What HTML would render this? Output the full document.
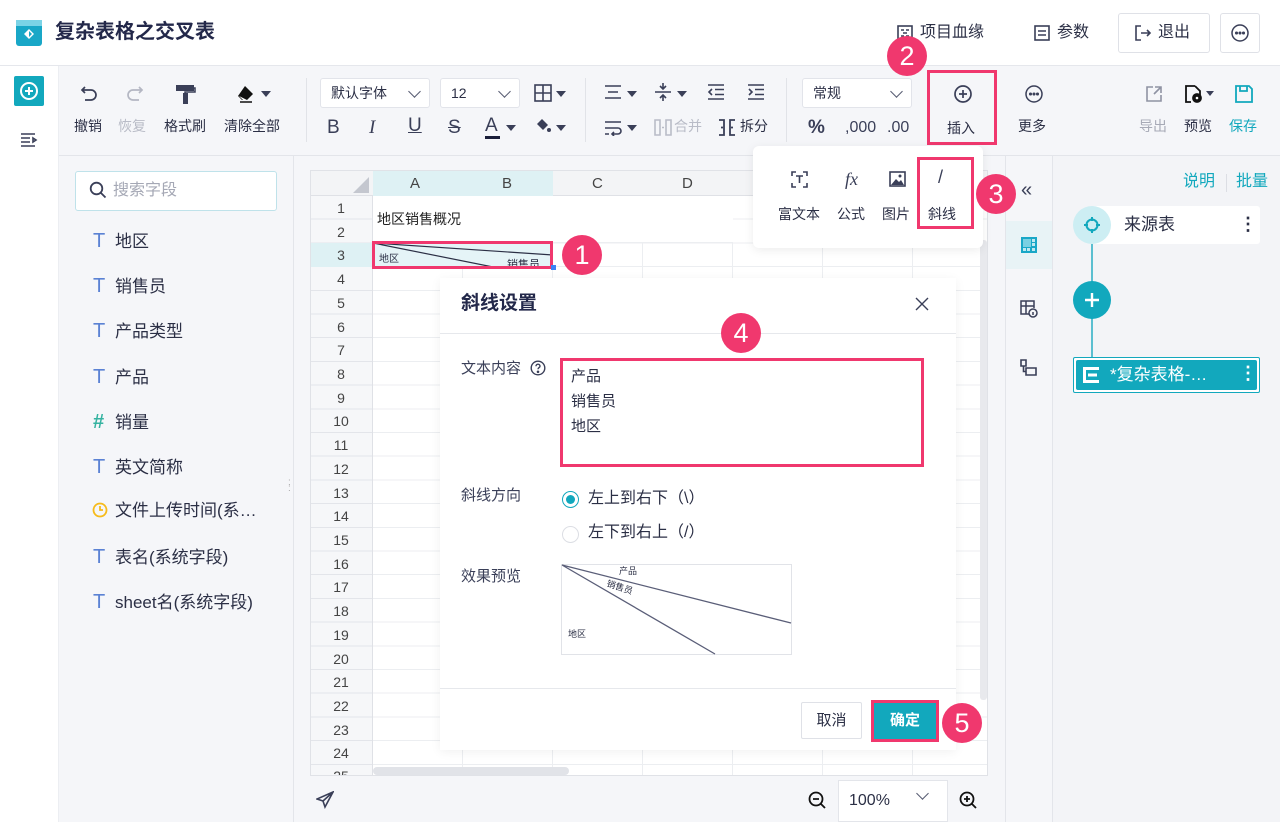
<!DOCTYPE html>
<html><head><meta charset="utf-8">
<style>
*{box-sizing:border-box;margin:0;padding:0}
body{width:1280px;height:822px;overflow:hidden;background:#fff;font-family:"Liberation Sans","Noto Sans CJK SC",sans-serif;color:#2b2f45;position:relative;line-height:1.15}
.a{position:absolute}
.t{font-size:14px;color:#2b2f45;white-space:nowrap}
.ic{position:absolute}
.red{position:absolute;border:3px solid #f0386e}
.num{position:absolute;width:40px;height:40px;border-radius:50%;background:#f0386e;color:#fff;font-size:27px;text-align:center;line-height:40px}
.sel{position:absolute;background:#fff;border:1px solid #e2e4ea;border-radius:3px;font-size:14px;padding-left:10px;line-height:28px}
.chev{position:absolute;right:10px;top:8px;width:9px;height:9px;border-right:1.5px solid #555a70;border-bottom:1.5px solid #555a70;transform:rotate(45deg)}
.tri{display:inline-block;width:0;height:0;border-left:5px solid transparent;border-right:5px solid transparent;border-top:6px solid #3a3f58;vertical-align:middle}
.fld{position:absolute;left:93px;font-size:17px;color:#2b2f45}
.fld i{font-style:normal;color:#5b82d4;font-size:20px;display:inline-block;width:22px}
.rh{position:absolute;left:310px;width:62px;text-align:center;font-size:14px;color:#444}
.top{z-index:10}
</style></head><body>

<!-- header -->
<div class="a" style="left:0;top:0;width:1280px;height:66px;border-bottom:1px solid #e5e7ec;background:#fff"></div>
<svg class="ic" style="left:16px;top:20px" width="26" height="26" viewBox="0 0 26 26"><rect x="0" y="0" width="26" height="26" rx="3" fill="#19a7c7"/><rect x="0" y="0" width="26" height="6" fill="#7bd3e6"/><path d="M13 9 L18 14 L13 19 L8 14Z" fill="#fff"/><path d="M13 11 L16 14 L13 17" fill="#19a7c7"/></svg>
<div class="a" style="left:55px;top:21px;font-size:20px;font-weight:bold;color:#23284a">复杂表格之交叉表</div>
<svg class="ic" style="left:897px;top:25px" width="16" height="16" viewBox="0 0 16 16" fill="none" stroke="#3a3f58" stroke-width="1.6"><rect x="1" y="1" width="14" height="14"/><path d="M4 5h3M9 5h3M4 11h3M9 11h3M6 8h4"/></svg>
<div class="a t" style="left:920px;top:24px;font-size:16px">项目血缘</div>
<svg class="ic" style="left:1034px;top:25px" width="16" height="16" viewBox="0 0 16 16" fill="none" stroke="#3a3f58" stroke-width="1.6"><rect x="1" y="1" width="14" height="14"/><path d="M4 6h8M4 10h8"/></svg>
<div class="a t" style="left:1057px;top:24px;font-size:16px">参数</div>
<div class="a" style="left:1118px;top:13px;width:92px;height:40px;border:1px solid #dfe1e7;border-radius:3px"></div>
<svg class="ic" style="left:1134px;top:24px" width="18" height="18" viewBox="0 0 18 18" fill="none" stroke="#3a3f58" stroke-width="1.6"><path d="M7 2H2v14h5M7 9h9M13 6l3 3-3 3"/></svg>
<div class="a t" style="left:1158px;top:24px;font-size:16px">退出</div>
<div class="a" style="left:1220px;top:13px;width:40px;height:40px;border:1px solid #dfe1e7;border-radius:3px"></div>
<svg class="ic" style="left:1230px;top:23px" width="20" height="20" viewBox="0 0 20 20" fill="none" stroke="#3a3f58" stroke-width="1.5"><circle cx="10" cy="10" r="8"/><circle cx="6.5" cy="10" r=".8" fill="#3a3f58"/><circle cx="10" cy="10" r=".8" fill="#3a3f58"/><circle cx="13.5" cy="10" r=".8" fill="#3a3f58"/></svg>

<!-- left bar -->
<div class="a" style="left:0;top:66px;width:59px;height:756px;background:#fff;border-right:1px solid #eceef2"></div>
<div class="a" style="left:14px;top:76px;width:30px;height:30px;background:#12a8bd;border-radius:2px"></div>
<svg class="ic" style="left:19px;top:81px" width="20" height="20" viewBox="0 0 20 20" fill="none" stroke="#fff" stroke-width="2"><circle cx="10" cy="10" r="8"/><path d="M10 6v8M6 10h8"/></svg>
<svg class="ic" style="left:20px;top:132px" width="18" height="16" viewBox="0 0 18 16" fill="none" stroke="#3a3f58" stroke-width="1.6"><path d="M1 2h14M1 6h9M1 10h9M1 14h14M13 6l3 2-3 2z"/></svg>

<!-- toolbar -->
<div class="a" style="left:59px;top:66px;width:1221px;height:90px;background:#f5f6f9;border-bottom:1px solid #e3e5ea"></div>
<svg class="ic" style="left:80px;top:85px" width="20" height="18" viewBox="0 0 20 18" fill="none" stroke="#3a3f58" stroke-width="1.7"><path d="M5 2L2 5l3 3M2 5h9a5 5 0 010 10H5"/></svg>
<svg class="ic" style="left:124px;top:85px" width="20" height="18" viewBox="0 0 20 18" fill="none" stroke="#b4b7c3" stroke-width="1.7"><path d="M15 2l3 3-3 3M18 5H9a5 5 0 000 10h6"/></svg>
<svg class="ic" style="left:176px;top:83px" width="20" height="22" viewBox="0 0 20 22"><rect x="0" y="2" width="18" height="6" fill="#3a3f58"/><rect x="7" y="10" width="5" height="11" fill="#3a3f58"/><path d="M18 5h1v4H9v2" stroke="#3a3f58" fill="none" stroke-width="1.5"/></svg>
<svg class="ic" style="left:236px;top:85px" width="22" height="18" viewBox="0 0 22 18"><path d="M9 1L17 9 11 15H6L2 11Z" fill="#111"/><path d="M3 11l4 4h4" fill="#fff"/><path d="M4 17h12" stroke="#111" stroke-width="1.5"/></svg>
<span class="tri a" style="left:261px;top:91px"></span>
<div class="a t" style="left:74px;top:118px">撤销</div>
<div class="a t" style="left:118px;top:118px;color:#b9bcc7">恢复</div>
<div class="a t" style="left:164px;top:118px">格式刷</div>
<div class="a t" style="left:224px;top:118px">清除全部</div>
<div class="a" style="left:306px;top:78px;width:1px;height:64px;background:#e1e3e8"></div>
<div class="sel" style="left:320px;top:78px;width:110px;height:30px">默认字体<span class="chev"></span></div>
<div class="sel" style="left:440px;top:78px;width:80px;height:30px">12<span class="chev"></span></div>
<svg class="ic" style="left:534px;top:84px" width="18" height="18" viewBox="0 0 18 18" fill="none" stroke="#3a3f58" stroke-width="1.6"><rect x="1" y="1" width="16" height="16"/><path d="M9 1v16M1 9h16"/></svg>
<span class="tri a" style="left:556px;top:91px"></span>
<div class="a" style="left:327px;top:117px;font-size:19px;color:#3a3f58">B</div>
<div class="a" style="left:369px;top:117px;font-size:19px;color:#3a3f58;font-style:italic;font-family:'Liberation Serif',serif">I</div>
<div class="a" style="left:408px;top:115px;font-size:19px;color:#3a3f58;text-decoration:underline">U</div>
<div class="a" style="left:448px;top:117px;font-size:19px;color:#3a3f58;text-decoration:line-through">S</div>
<div class="a" style="left:485px;top:115px;font-size:19px;color:#3a3f58">A</div>
<div class="a" style="left:485px;top:136px;width:15px;height:3px;background:#1a1e3a"></div>
<span class="tri a" style="left:506px;top:125px"></span>
<svg class="ic" style="left:534px;top:117px" width="18" height="18" viewBox="0 0 18 18"><path d="M8 2l6 6-5 5-6-6z" fill="#3a3f58"/><circle cx="15" cy="13" r="2" fill="#3a3f58"/></svg>
<span class="tri a" style="left:556px;top:125px"></span>
<div class="a" style="left:585px;top:78px;width:1px;height:64px;background:#e1e3e8"></div>
<svg class="ic" style="left:604px;top:84px" width="18" height="16" viewBox="0 0 18 16" fill="none" stroke="#3a3f58" stroke-width="1.6"><path d="M1 2h16M4 8h10M1 14h16"/></svg>
<span class="tri a" style="left:627px;top:91px"></span>
<svg class="ic" style="left:654px;top:82px" width="18" height="20" viewBox="0 0 18 20" fill="none" stroke="#3a3f58" stroke-width="1.6"><path d="M1 10h16M9 1v6M6 4l3 3 3-3M9 19v-6M6 16l3-3 3 3"/></svg>
<span class="tri a" style="left:677px;top:91px"></span>
<svg class="ic" style="left:707px;top:84px" width="18" height="16" viewBox="0 0 18 16" fill="none" stroke="#3a3f58" stroke-width="1.6"><path d="M1 1h16M8 5.5h9M8 10.5h9M1 15h16M5 5L2 8l3 3"/></svg>
<svg class="ic" style="left:747px;top:84px" width="18" height="16" viewBox="0 0 18 16" fill="none" stroke="#3a3f58" stroke-width="1.6"><path d="M1 1h16M8 5.5h9M8 10.5h9M1 15h16M2 5l3 3-3 3"/></svg>
<svg class="ic" style="left:604px;top:120px" width="18" height="16" viewBox="0 0 18 16" fill="none" stroke="#3a3f58" stroke-width="1.6"><path d="M1 2h16M1 8h13a3 3 0 010 6H8M10 12l-2 2 2 2M1 14h4"/></svg>
<span class="tri a" style="left:627px;top:125px"></span>
<svg class="ic" style="left:654px;top:119px" width="18" height="17" viewBox="0 0 18 17" fill="none" stroke="#b9bcc7" stroke-width="1.6"><path d="M1 1h5v15H1zM12 1h5v15h-5zM8 8.5h2"/></svg>
<div class="a t" style="left:674px;top:118px;color:#b9bcc7">合并</div>
<svg class="ic" style="left:718px;top:119px" width="18" height="17" viewBox="0 0 18 17" fill="none" stroke="#3a3f58" stroke-width="1.8"><path d="M1 1h5v15H1M17 1h-5v15h5M3 8.5h2M13 8.5h2"/></svg>
<div class="a t" style="left:740px;top:118px">拆分</div>
<div class="a" style="left:786px;top:78px;width:1px;height:64px;background:#e1e3e8"></div>
<div class="sel" style="left:802px;top:78px;width:110px;height:30px">常规<span class="chev"></span></div>
<div class="a" style="left:808px;top:117px;font-size:19px;font-weight:bold;color:#3a3f58">%</div>
<div class="a" style="left:845px;top:119px;font-size:16px;color:#3a3f58">,000</div>
<div class="a" style="left:887px;top:119px;font-size:16px;color:#3a3f58">.00</div>
<svg class="ic" style="left:953px;top:84px" width="20" height="20" viewBox="0 0 20 20" fill="none" stroke="#3a3f58" stroke-width="1.7"><circle cx="10" cy="10" r="8"/><path d="M10 6v8M6 10h8"/></svg>
<div class="a t" style="left:947px;top:120px">插入</div>
<div class="red" style="left:927px;top:70px;width:70px;height:75px"></div>
<div class="num" style="left:887px;top:36px">2</div>
<svg class="ic" style="left:1024px;top:84px" width="20" height="20" viewBox="0 0 20 20" fill="none" stroke="#3a3f58" stroke-width="1.5"><circle cx="10" cy="10" r="8"/><circle cx="6.5" cy="10" r=".8" fill="#3a3f58"/><circle cx="10" cy="10" r=".8" fill="#3a3f58"/><circle cx="13.5" cy="10" r=".8" fill="#3a3f58"/></svg>
<div class="a t" style="left:1018px;top:118px">更多</div>
<svg class="ic" style="left:1145px;top:85px" width="18" height="18" viewBox="0 0 18 18" fill="none" stroke="#8f93a3" stroke-width="1.6"><path d="M8 2H2v14h14v-6M10 2h6v6M16 2l-7 7"/></svg>
<svg class="ic" style="left:1185px;top:85px" width="18" height="18" viewBox="0 0 18 18" fill="none" stroke="#111" stroke-width="1.8"><path d="M10 1H1v16h5M10 1l5 5v4"/><circle cx="12" cy="13" r="4" fill="#111"/><circle cx="12" cy="13" r="1.3" fill="#fff" stroke="none"/></svg>
<span class="tri a" style="left:1206px;top:91px;border-width:5px 4px 0"></span>
<svg class="ic" style="left:1235px;top:85px" width="18" height="18" viewBox="0 0 18 18" fill="none" stroke="#12a8bd" stroke-width="1.8"><path d="M1 1h13l3 3v13H1zM5 1v5h7V1"/></svg>
<div class="a t" style="left:1139px;top:118px;color:#a7aab6">导出</div>
<div class="a t" style="left:1184px;top:118px">预览</div>
<div class="a t" style="left:1229px;top:118px;color:#12a8bd">保存</div>

<!-- field panel -->
<div class="a" style="left:59px;top:156px;width:235px;height:666px;background:#f5f6f9;border-right:1px solid #e3e5ea"></div>
<div class="a" style="left:75px;top:171px;width:202px;height:40px;background:#fff;border:1px solid #bfe2ea;border-radius:3px"></div>
<svg class="ic" style="left:89px;top:181px" width="18" height="18" viewBox="0 0 18 18" fill="none" stroke="#3a3f58" stroke-width="1.8"><circle cx="7.5" cy="7.5" r="5.8"/><path d="M12 12l4.5 4.5"/></svg>
<div class="a" style="left:113px;top:182px;font-size:16px;color:#a5a8b5">搜索字段</div>
<div class="fld" style="top:230px"><i>T</i>地区</div>
<div class="fld" style="top:275px"><i>T</i>销售员</div>
<div class="fld" style="top:320px"><i>T</i>产品类型</div>
<div class="fld" style="top:366px"><i>T</i>产品</div>
<div class="fld" style="top:411px"><i style="color:#35b3a1;font-weight:bold">#</i>销量</div>
<div class="fld" style="top:456px"><i>T</i>英文简称</div>
<svg class="ic" style="left:92px;top:502px" width="16" height="16" viewBox="0 0 16 16" fill="none" stroke="#f6bb1b" stroke-width="1.8"><circle cx="8" cy="8" r="6.5"/><path d="M8 4v4h3"/></svg>
<div class="fld" style="top:501px"><i></i>文件上传时间(系…</div>
<div class="fld" style="top:546px"><i>T</i>表名(系统字段)</div>
<div class="fld" style="top:591px"><i>T</i>sheet名(系统字段)</div>
<div class="a" style="left:288px;top:480px;color:#aaa;font-size:10px;line-height:6px">: :<br>: :</div>

<!-- sheet area bg -->
<div class="a" style="left:294px;top:156px;width:711px;height:666px;background:#f5f6f9"></div>
<div class="a" style="left:310px;top:170px;width:678px;height:606px;background:#fff;border:1px solid #e0e2e7;overflow:hidden">
  <div class="a" style="left:0;top:0;width:678px;height:25px;background:#f3f4f6;border-bottom:1px solid #dfe1e6"></div>
  <div class="a" style="left:62px;top:0;width:180px;height:25px;background:#def1f4"></div>
  <div class="a" style="left:0;top:25px;width:62px;height:590px;background:#f6f7f9;border-right:1px solid #dfe1e6;background-image:repeating-linear-gradient(to bottom,transparent 0,transparent 22.7px,#e3e5ea 22.7px,#e3e5ea 23.7px)"></div>
  <div class="a" style="left:62px;top:25px;width:616px;height:590px;background-image:repeating-linear-gradient(to bottom,transparent 0,transparent 22.7px,#eceef1 22.7px,#eceef1 23.7px),repeating-linear-gradient(to right,transparent 0,transparent 89px,#eceef1 89px,#eceef1 90px)"></div>
  <div class="a" style="left:0;top:72px;width:62px;height:24px;background:#def1f4"></div>
  <svg class="ic" style="left:42px;top:6px" width="16" height="16"><path d="M16 0V16H0Z" fill="#c4c7cf"/></svg>
  <div class="a" style="left:62px;top:25px;width:360px;height:47px;background:#fff;border-bottom:1px solid #eceef1"></div>
  <div class="a" style="left:66px;top:40px;font-size:14px;color:#222">地区销售概况</div>
  <div class="a" style="left:62px;top:72px;width:180px;height:24px;background:#e5f4f7"></div>
  <svg class="ic" style="left:62px;top:72px" width="180" height="24"><path d="M0 0L180 12M0 0L120 24" stroke="#2b2f45" stroke-width="1.2" fill="none"/><text x="6" y="19" font-size="10" fill="#2b2f45" font-family="Noto Sans CJK SC">地区</text><text x="134" y="25" font-size="11" fill="#2b2f45" font-family="Noto Sans CJK SC">销售员</text></svg>
  <div class="a" style="left:62px;top:596px;width:196px;height:8px;border-radius:4px;background:#e1e3e8"></div>
</div>
<div class="rh" style="top:200px">1</div><div class="rh" style="top:224px">2</div><div class="rh" style="top:247px">3</div><div class="rh" style="top:271px">4</div><div class="rh" style="top:295px">5</div><div class="rh" style="top:319px">6</div><div class="rh" style="top:342px">7</div><div class="rh" style="top:366px">8</div><div class="rh" style="top:390px">9</div><div class="rh" style="top:413px">10</div><div class="rh" style="top:437px">11</div><div class="rh" style="top:461px">12</div><div class="rh" style="top:485px">13</div><div class="rh" style="top:508px">14</div><div class="rh" style="top:532px">15</div><div class="rh" style="top:556px">16</div><div class="rh" style="top:579px">17</div><div class="rh" style="top:603px">18</div><div class="rh" style="top:627px">19</div><div class="rh" style="top:651px">20</div><div class="rh" style="top:674px">21</div><div class="rh" style="top:698px">22</div><div class="rh" style="top:722px">23</div><div class="rh" style="top:745px">24</div><div class="rh" style="top:768px;height:7px;overflow:hidden">25</div>
<div class="a" style="left:410px;top:175px;font-size:15px;color:#444">A</div>
<div class="a" style="left:502px;top:175px;font-size:15px;color:#444">B</div>
<div class="a" style="left:592px;top:175px;font-size:15px;color:#444">C</div>
<div class="a" style="left:682px;top:175px;font-size:15px;color:#444">D</div>
<div class="red" style="left:372px;top:241px;width:181px;height:28px"></div>
<div class="a" style="left:551px;top:265px;width:5px;height:5px;background:#3b82f6"></div>
<div class="num" style="left:562px;top:235px">1</div>

<!-- bottom bar -->
<svg class="ic" style="left:316px;top:791px" width="18" height="18" viewBox="0 0 18 18" fill="none" stroke="#3a3f58" stroke-width="1.6"><path d="M17 1L1 8l6 2 2 6zM7 10l10-9"/></svg>
<svg class="ic" style="left:808px;top:791px" width="18" height="18" viewBox="0 0 18 18" fill="none" stroke="#111" stroke-width="1.8"><circle cx="8" cy="8" r="6.5"/><path d="M5 8h6M13 13l4 4"/></svg>
<div class="a" style="left:838px;top:780px;width:110px;height:42px;background:#fff;border:1px solid #e3e5ea"></div>
<div class="a" style="left:849px;top:792px;font-size:16px;color:#2b2f45">100%</div>
<div class="a" style="left:918px;top:789px;width:9px;height:9px;border-right:1.5px solid #555a70;border-bottom:1.5px solid #555a70;transform:rotate(45deg)"></div>
<svg class="ic" style="left:959px;top:791px" width="18" height="18" viewBox="0 0 18 18" fill="none" stroke="#111" stroke-width="1.8"><circle cx="8" cy="8" r="6.5"/><path d="M5 8h6M8 5v6M13 13l4 4"/></svg>

<!-- dialog -->
<div class="a" style="left:440px;top:278px;width:516px;height:472px;background:#fff;box-shadow:0 2px 10px rgba(0,0,0,.06)"></div>
<div class="a" style="left:461px;top:293px;font-size:19px;font-weight:bold;color:#23284a">斜线设置</div>
<svg class="ic" style="left:915px;top:297px" width="14" height="14" viewBox="0 0 14 14" stroke="#3a3f58" stroke-width="1.4"><path d="M1 1l12 12M13 1L1 13"/></svg>
<div class="a" style="left:440px;top:333px;width:516px;height:1px;background:#e6e8ec"></div>
<div class="a t" style="left:461px;top:360px;font-size:15px;color:#3a3f58">文本内容</div>
<svg class="ic" style="left:530px;top:360px" width="16" height="16" viewBox="0 0 16 16" fill="none" stroke="#3a3f58" stroke-width="1.4"><circle cx="8" cy="8" r="6.8"/><path d="M6 6.2a2 2 0 114 0c0 1.3-2 1.5-2 3"/><circle cx="8" cy="11.8" r=".6" fill="#3a3f58"/></svg>
<div class="red" style="left:560px;top:358px;width:364px;height:109px"></div>
<div class="a" style="left:571px;top:364px;font-size:15px;line-height:25px;color:#2b2f45">产品<br>销售员<br>地区</div>
<div class="num" style="left:721px;top:313px">4</div>
<div class="a t" style="left:461px;top:487px;font-size:15px;color:#3a3f58">斜线方向</div>
<div class="a" style="left:562px;top:491px;width:17px;height:17px;border-radius:50%;border:1px solid #12a8bd"></div>
<div class="a" style="left:566px;top:495px;width:9px;height:9px;border-radius:50%;background:#12a8bd"></div>
<div class="a t" style="left:588px;top:490px;font-size:16px">左上到右下（\）</div>
<div class="a" style="left:562px;top:526px;width:17px;height:17px;border-radius:50%;border:1px solid #dcdee4"></div>
<div class="a t" style="left:588px;top:524px;font-size:16px">左下到右上（/）</div>
<div class="a t" style="left:461px;top:568px;font-size:15px;color:#3a3f58">效果预览</div>
<svg class="ic" style="left:561px;top:564px" width="231" height="91"><rect x=".5" y=".5" width="230" height="90" fill="#fff" stroke="#e1e3e8"/><path d="M1 1L230 59M1 1L154 90" stroke="#5a5e78" stroke-width="1.3"/><text x="58" y="10" font-size="9" fill="#2b2f45" font-family="Noto Sans CJK SC">产品</text><text x="45" y="22" font-size="9" fill="#2b2f45" font-family="Noto Sans CJK SC" transform="rotate(18 45 22)">销售员</text><text x="7" y="73" font-size="9" fill="#2b2f45" font-family="Noto Sans CJK SC">地区</text></svg>
<div class="a" style="left:440px;top:688px;width:516px;height:1px;background:#e6e8ec"></div>
<div class="a" style="left:801px;top:702px;width:61px;height:37px;border:1px solid #dfe1e7;border-radius:2px;font-size:15px;text-align:center;line-height:35px">取消</div>
<div class="a" style="left:874px;top:703px;width:62px;height:36px;background:#12a8bd;color:#fff;font-size:15px;text-align:center;line-height:36px;font-weight:bold;outline:3px solid #f0386e">确定</div>
<div class="num" style="left:942px;top:703px">5</div>
<div class="a" style="left:980px;top:240px;width:7px;height:460px;background:#e8e9ed;border-radius:3px"></div>

<!-- right icon bar -->
<div class="a" style="left:1005px;top:156px;width:48px;height:666px;background:#f5f6f9;border-left:1px solid #e3e5ea;border-right:1px solid #e3e5ea"></div>
<div class="a" style="left:1021px;top:179px;font-size:20px;color:#3a3f58">«</div>
<div class="a" style="left:1006px;top:221px;width:46px;height:48px;background:#e8f3f6"></div>
<svg class="ic" style="left:1021px;top:237px" width="16" height="16" viewBox="0 0 16 16"><rect width="16" height="16" fill="#19a7c7"/><rect x="2" y="2" width="8" height="8" fill="#7ad0e2"/><rect x="11" y="2" width="3" height="3" fill="#bfe8f0"/><rect x="11" y="6" width="3" height="3" fill="#bfe8f0"/><rect x="2" y="11" width="3" height="3" fill="#bfe8f0"/><rect x="6" y="11" width="3" height="3" fill="#bfe8f0"/><rect x="11" y="11" width="3" height="3" fill="#bfe8f0"/></svg>
<svg class="ic" style="left:1020px;top:300px" width="18" height="18" viewBox="0 0 18 18" fill="none" stroke="#3a3f58" stroke-width="1.5"><path d="M9 14H1V1h13v7M1 6h13M6 1v13"/><circle cx="13" cy="13" r="4"/><path d="M13 12v3"/></svg>
<svg class="ic" style="left:1020px;top:359px" width="18" height="17" viewBox="0 0 18 17" fill="none" stroke="#3a3f58" stroke-width="1.6"><path d="M6 1H1v6h5zM16 9H6v7h10zM3.5 7v5.5H6"/></svg>

<!-- right panel -->
<div class="a" style="left:1053px;top:156px;width:227px;height:666px;background:#f3f4f7"></div>
<div class="a" style="left:1183px;top:173px;font-size:16px;color:#12a8bd">说明</div>
<div class="a" style="left:1226px;top:174px;width:1px;height:18px;background:#dcdee4"></div>
<div class="a" style="left:1236px;top:173px;font-size:16px;color:#12a8bd">批量</div>
<div class="a" style="left:1092px;top:206px;width:168px;height:38px;background:#fff;border-radius:3px"></div>
<div class="a" style="left:1073px;top:206px;width:38px;height:38px;border-radius:50%;background:#cdeef3"></div>
<svg class="ic" style="left:1083px;top:216px" width="18" height="18" viewBox="0 0 18 18" fill="none" stroke="#12a8bd" stroke-width="2"><circle cx="9" cy="9" r="5.5"/><path d="M9 1v4M9 13v4M1 9h4M13 9h4"/></svg>
<div class="a" style="left:1124px;top:215px;font-size:17px;color:#2b2f45">来源表</div>
<div class="a" style="left:1239px;top:214px;font-size:18px;font-weight:bold;color:#2b2f45">⋮</div>
<div class="a" style="left:1091px;top:244px;width:2px;height:115px;background:#5bbfd0"></div>
<div class="a" style="left:1073px;top:281px;width:38px;height:38px;border-radius:50%;background:#12a8bd"></div>
<svg class="ic" style="left:1083px;top:291px" width="18" height="18" stroke="#fff" stroke-width="2.4"><path d="M9 2v14M2 9h14"/></svg>
<div class="a" style="left:1073px;top:357px;width:187px;height:36px;border:1px solid #12a8bd;border-radius:2px;background:#fff"></div>
<div class="a" style="left:1076px;top:360px;width:181px;height:30px;background:#12a8bd;border-radius:2px"></div>
<svg class="ic" style="left:1083px;top:367px" width="16" height="16" viewBox="0 0 16 16" fill="#fff"><rect width="16" height="3"/><rect y="0" width="3" height="16"/><rect x="5" y="6.5" width="9" height="3"/><rect y="13" width="16" height="3"/></svg>
<div class="a" style="left:1110px;top:365px;font-size:17px;color:#fff">*复杂表格-…</div>
<div class="a" style="left:1239px;top:363px;font-size:18px;font-weight:bold;color:#fff">⋮</div>

<!-- insert popup (on top) -->
<div class="a top" style="left:753px;top:146px;width:230px;height:102px;background:#fff;border-radius:6px;box-shadow:0 2px 10px rgba(0,0,0,.08)"></div>
<svg class="ic top" style="left:791px;top:171px" width="17" height="17" viewBox="0 0 17 17" fill="none" stroke="#3a3f58" stroke-width="1.6"><path d="M1 5V1h4M12 1h4v4M16 12v4h-4M5 16H1v-4M5 5h7M8.5 5v7"/></svg>
<div class="a top" style="left:845px;top:169px;font-size:18px;font-style:italic;font-family:'Liberation Serif',serif;color:#3a3f58">fx</div>
<svg class="ic top" style="left:889px;top:171px" width="17" height="16" viewBox="0 0 17 16"><rect x="1" y="1" width="15" height="14" fill="none" stroke="#3a3f58" stroke-width="1.6"/><path d="M2 14l5-6 3 3 2-2 3 5z" fill="#3a3f58"/><circle cx="11" cy="5" r="1.5" fill="#3a3f58"/></svg>
<div class="a top" style="left:938px;top:167px;font-size:18px;color:#3a3f58">/</div>
<div class="a t top" style="left:778px;top:206px">富文本</div>
<div class="a t top" style="left:837px;top:206px">公式</div>
<div class="a t top" style="left:882px;top:206px">图片</div>
<div class="a t top" style="left:928px;top:206px">斜线</div>
<div class="red top" style="left:917px;top:157px;width:57px;height:72px"></div>
<div class="num top" style="left:976px;top:174px">3</div>
</body></html>
